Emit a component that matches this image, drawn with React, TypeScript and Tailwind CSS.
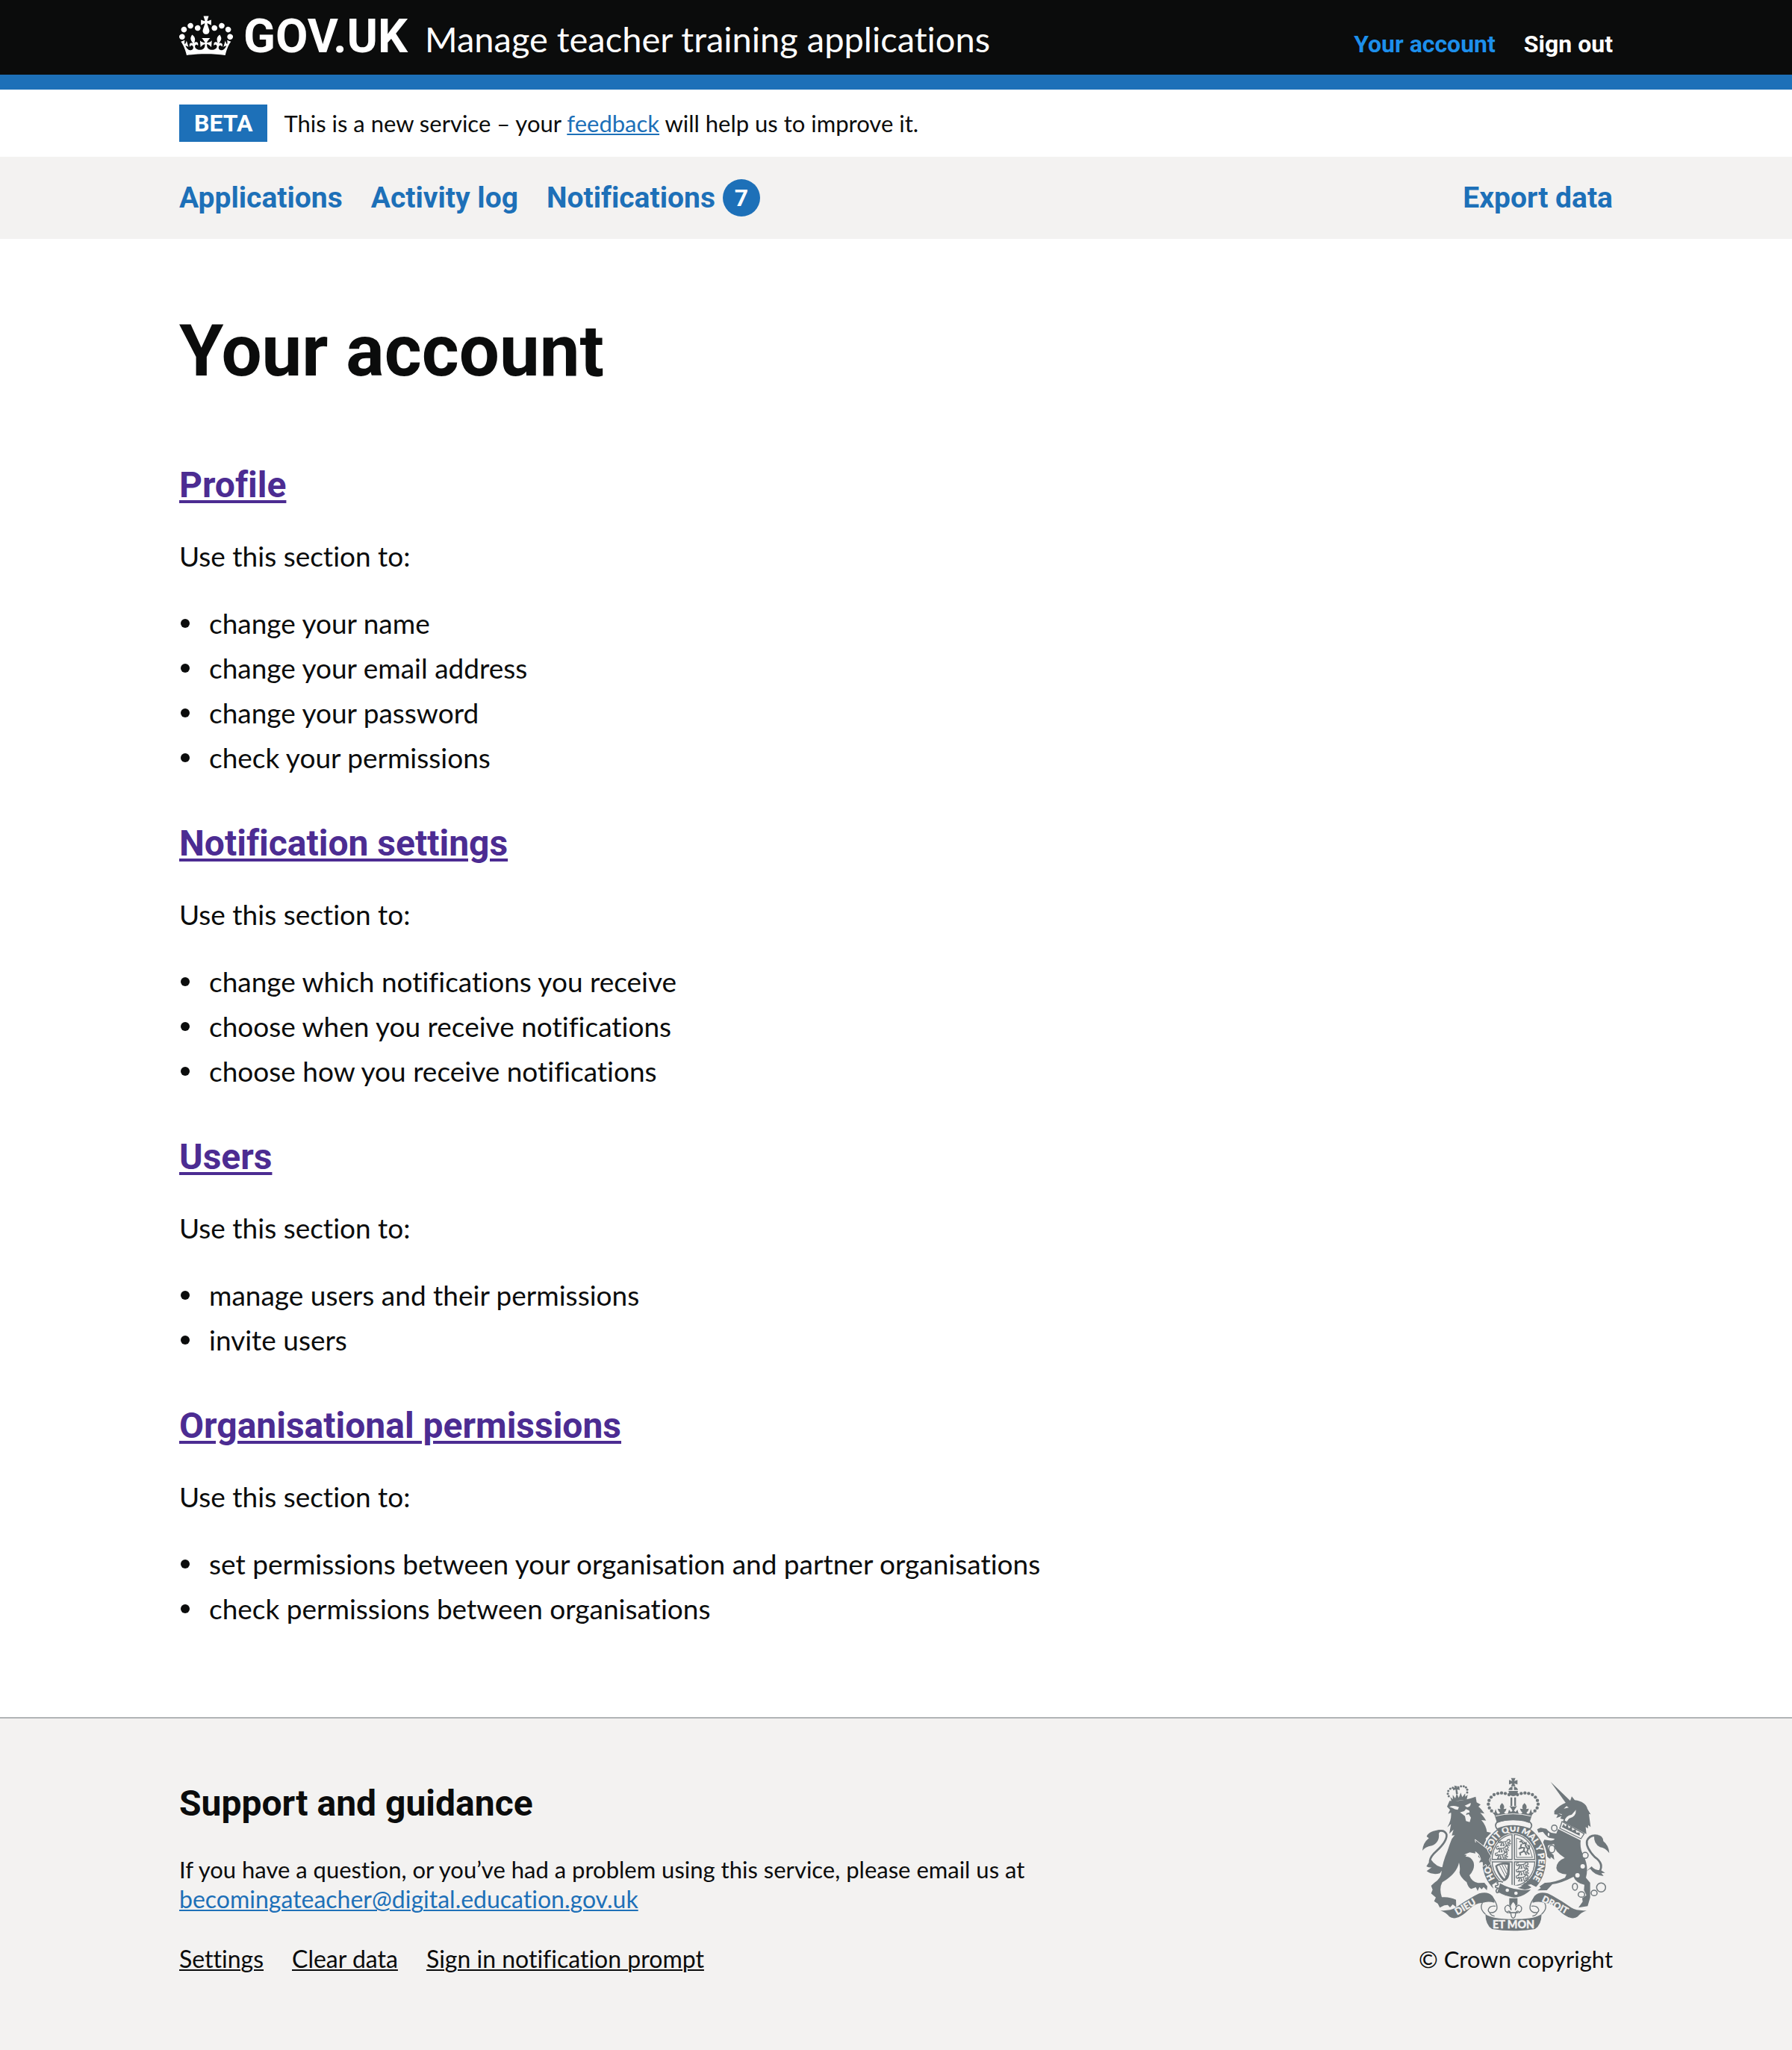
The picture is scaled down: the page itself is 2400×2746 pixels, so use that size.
import type { ReactNode } from "react";

const SECTIONS = [
  {
    title: "Profile",
    items: [
      "change your name",
      "change your email address",
      "change your password",
      "check your permissions",
    ],
  },
  {
    title: "Notification settings",
    items: [
      "change which notifications you receive",
      "choose when you receive notifications",
      "choose how you receive notifications",
    ],
  },
  {
    title: "Users",
    items: ["manage users and their permissions", "invite users"],
  },
  {
    title: "Organisational permissions",
    items: [
      "set permissions between your organisation and partner organisations",
      "check permissions between organisations",
    ],
  },
];

const FOOTER_LINKS = ["Settings", "Clear data", "Sign in notification prompt"];

function Container({ className = "", children }: { className?: string; children: ReactNode }) {
  return <div className={"mx-auto w-full max-w-[1980px] px-[30px] " + className}>{children}</div>;
}

function Crown() {
  return (
    <svg aria-hidden="true" viewBox="0 0 132 97" className="h-[54px] w-[72px] shrink-0 self-start" fill="currentColor">
      <path
        fillRule="evenodd"
        d="M25 30.2c3.5 1.5 7.7-.2 9.1-3.7 1.5-3.6-.2-7.8-3.9-9.2-3.6-1.4-7.6.3-9.1 3.9-1.4 3.5.3 7.5 3.9 9zM9 39.5c3.6 1.5 7.8-.2 9.2-3.7 1.5-3.6-.2-7.8-3.9-9.1-3.6-1.5-7.6.2-9.1 3.8-1.4 3.5.3 7.5 3.8 9zM4.4 57.2c3.5 1.5 7.7-.2 9.1-3.8 1.5-3.6-.2-7.7-3.9-9.1-3.5-1.5-7.6.3-9.1 3.8-1.4 3.5.3 7.6 3.9 9.1zm38.3-21.4c3.5 1.5 7.7-.2 9.1-3.8 1.5-3.6-.2-7.7-3.9-9.1-3.6-1.5-7.6.3-9.1 3.8-1.3 3.6.4 7.7 3.9 9.1zm64.4-5.6c-3.6 1.5-7.8-.2-9.1-3.7-1.5-3.6.2-7.8 3.8-9.2 3.6-1.4 7.7.3 9.2 3.9 1.3 3.5-.4 7.5-3.9 9zm15.9 9.3c-3.6 1.5-7.7-.2-9.1-3.7-1.5-3.6.2-7.8 3.7-9.1 3.6-1.5 7.7.2 9.2 3.8 1.5 3.5-.3 7.5-3.8 9zm4.7 17.7c-3.6 1.5-7.8-.2-9.2-3.8-1.5-3.6.2-7.7 3.9-9.1 3.6-1.5 7.7.3 9.2 3.8 1.3 3.5-.4 7.6-3.9 9.1zM89.3 35.8c-3.6 1.5-7.8-.2-9.2-3.8-1.4-3.6.2-7.7 3.9-9.1 3.6-1.5 7.7.3 9.2 3.8 1.4 3.6-.3 7.7-3.9 9.1zM69.7 17.7l8.9 4.7V9.3l-8.9 2.8c-.2-.3-.5-.6-.9-.9L72.4 0H59.6l3.5 11.2c-.3.3-.6.5-.9.9l-8.8-2.8v13.1l8.8-4.7c.3.3.6.7.9.9l-5 15.4v.1c-.2.8-.4 1.6-.4 2.4 0 4.1 3.1 7.5 7 8.1h.2c.3 0 .7.1 1 .1.4 0 .7 0 1-.1h.2c4-.6 7.1-4.1 7.1-8.1 0-.8-.1-1.7-.4-2.4V34l-5.1-15.4c.4-.2.7-.6 1-.9zM66 92.8c16.9 0 32.8 1.1 47.1 3.2 4-16.9 8.9-26.7 14-33.5l-9.6-3.4c1 4.9 1.1 7.2 0 10.2-1.5-1.4-3-4.3-4.2-8.7L108.6 76c2.8-2 5-3.2 7.5-3.3-4.4 9.4-10 11.9-13.6 11.2-4.3-.8-6.3-4.6-5.6-7.9 1-4.7 5.7-5.9 8-.5 4.3-8.7-3-11.4-7.6-8.8 7.1-7.2 7.9-13.5 2.1-21.1-8 6.1-8.1 12.3-4.5 20.8-4.7-5.4-12.1-2.5-9.5 6.2 3.4-5.2 7.9-2 7.2 3.1-.6 4.3-6.4 7.8-13.5 7.2-10.3-.9-10.9-8-11.2-13.8 2.5-.5 7.1 1.8 11 7.3L80.2 60c-4.1 4.4-8 5.3-12.3 5.4 1.4-4.4 8-11.6 8-11.6H55.5s6.4 7.2 7.9 11.6c-4.2-.1-8-1-12.3-5.4l1.4 16.4c3.9-5.5 8.5-7.7 10.9-7.3-.3 5.8-.9 12.8-11.1 13.8-7.2.6-12.9-2.9-13.5-7.2-.7-5 3.8-8.3 7.1-3.1 2.7-8.7-4.6-11.6-9.4-6.2 3.7-8.5 3.6-14.7-4.6-20.8-5.8 7.6-5 13.9 2.2 21.1-4.7-2.6-11.9.1-7.7 8.8 2.3-5.5 7.1-4.2 8.1.5.7 3.3-1.3 7.1-5.7 7.9-3.5.7-9-1.8-13.5-11.2 2.5.1 4.7 1.3 7.5 3.3l-4.7-15.4c-1.2 4.4-2.7 7.2-4.3 8.7-1.1-3-.9-5.3 0-10.2l-9.5 3.4c5 6.9 9.9 16.7 14 33.5 14.8-2.1 30.8-3.2 47.7-3.2z"
      />
    </svg>
  );
}

const INK = "#6f777b";
const PAPER = "#f3f2f1";
const CREST_FONT = "Lato, sans-serif";
/* The lion's paw hides two letters of the motto, so the gap stands in for them. */
const GARTER_MOTTO = "HO" + "\u00a0".repeat(7) + "SOIT QUI MAL Y PENSE";

const CROWN_BEADS: [number, number][] = [
  [420, 132], [405, 127], [390, 125], [375, 127], [360, 132], [348, 142], [340, 155], [337, 170], [341, 185], [350, 197],
];

/* One half of the imperial crown; the other half is its mirror image. */
function CrownHalf() {
  return (
    <g>
      {CROWN_BEADS.map(([x, y]) => (
        <circle key={x} cx={x} cy={y} r="6.5" />
      ))}
      <path d="M438 234 Q400 234 372 246 L362 214 L344 192 Q352 206 362 204 L366 190 L372 206 Q380 212 384 204 L378 198 L374 188 L386 190 Q378 178 392 166 Q406 178 398 190 L410 188 L406 198 L400 204 Q406 212 416 206 L420 192 L428 202 L434 196 L422 178 L438 180 Z" />
      <path d="M426 143h7v34h-7z" />
    </g>
  );
}

/* One half of the motto scroll, from the outer tail to the inner curl. */
function ScrollHalf() {
  return (
    <g>
      <path d="M144 597 Q182 600 206 586 Q256 550 300 529 Q334 519 352 538 Q364 552 361 566 Q335 558 313 567 Q288 566 262 590 Q232 622 205 628 Q190 630 180 622 Q168 606 144 597 Z" />
      <path
        d="M313 567 Q300 590 325 612 M350 540 Q376 572 371 592 Q362 610 342 605 Q330 596 343 584 Q352 578 366 580 M342 606 Q348 618 362 620"
        fill="none"
        stroke={INK}
        strokeWidth="4"
      />
    </g>
  );
}

/* A passant lion, small enough to read as a few angular strokes. */
function PassantLion({ x, y }: { x: number; y: number }) {
  return (
    <path
      transform={`translate(${x} ${y})`}
      d="M0 2 Q-3 12 4 13 L8 9 Q22 12 34 6 L36 1 L44 0 L47 7 L41 12 L46 18 L50 16 M36 10 L40 23 L46 24 M28 11 L31 23 L37 23 M8 10 L13 17 L8 24 L14 24 M16 12 L22 19 L18 24 L24 24 M2 3 L9 1"
      fill="none"
      stroke={INK}
      strokeWidth="4"
      strokeLinejoin="round"
    />
  );
}

function RoyalArms() {
  return (
    <svg aria-hidden="true" viewBox="69 63 756 618" className="h-[206px] w-[252px]" fill={INK}>
      {/* Lion supporter */}
      <g>
        <path d="M190 163 L184 141 L194 151 L194 133 L204 147 L210 127 L218 145 L226 124 L232 142 L244 127 L244 140 L254 132 L250 152 Q220 152 190 163 Z" />
        {[[178, 138], [174, 128], [176, 117], [184, 108], [194, 104], [216, 102], [227, 98], [238, 98], [247, 103], [252, 112], [252, 123]].map(([x, y]) => (
          <circle key={`${x}-${y}`} cx={x} cy={y} r="4.5" />
        ))}
        <path d="M200 95l12 3-1 7 9-4 2 12-10-2 3 18-8 1-2-19-9 4-2-12 8 1z" />
        <path d="M171 180 L181 157 Q232 160 286 140 L290 163 L306 172 L297 180 Q308 188 321 208 L304 205 Q314 214 328 236 L309 234 Q328 256 331 281 L348 285 L326 308 Q332 330 341 345 L337 362 L346 379 L340 394 L346 410 L331 426 L327 412 L314 421 L313 404 L297 406 L306 391 L296 381 L302 366 L284 360 L285 368 L262 364 L240 373 L250 374 L245 381 Q266 378 277 402 Q286 428 261 456 Q270 482 296 487 L321 486 L333 500 L331 516 L318 503 L310 512 L301 503 L294 519 L287 504 L268 511 Q255 505 250 484 Q222 462 221 444 Q225 425 219 405 Q210 450 152 484 Q138 508 150 544 Q180 541 207 554 L208 584 L194 573 L183 585 L174 575 L160 577 L142 586 L134 570 L119 560 L126 545 L107 529 L113 514 L107 498 L120 486 Q149 466 149 440 Q154 402 172 360 Q182 330 190 310 L202 295 L190 296 L197 272 L180 289 L187 250 L172 263 Q190 232 187 204 L175 209 L183 193 Z" />
        <path d="M180 181 Q198 172 219 182 L214 193 Q200 191 196 187 Z M242 176 L266 165 Q268 180 252 183 Z M223 203 L240 198 L247 190 L260 196 L262 203 L250 206 L247 214 L258 210 L267 224 L262 242 L247 238 L243 218 L232 209 Z" fill={PAPER} />
        <path d="M151 434 Q100 425 102 398 Q104 380 130 357 Q172 318 169 292 Q160 270 132 280" fill="none" stroke={INK} strokeWidth="8" />
        <path d="M148 273 Q98 276 89 300 L98 307 Q74 326 72 357 Q82 342 110 337 Q142 324 138 288 Z" />
        <path d="M106 392 L88 420 Q100 426 110 424 L89 439 Q112 456 142 448 L160 424 Q128 424 106 392 Z" />
      </g>

      {/* Unicorn supporter */}
      <g>
        <path d="M587 80 L668 158 L650 168 Z" />
        <path d="M648 164 L666 156 L672 139 L684 154 Q728 160 735 189 L748 211 L741 210 L748 262 L738 254 L737 268 L728 262 L731 290 L636 240 L640 232 L626 228 L631 218 L610 226 L616 212 L602 211 L602 197 Q622 174 648 164 Z" />
        <path d="M640 188 L651 178 L660 184 Z M618 208 L632 210 L632 214 Z M689 193 Q690 222 661 228 L652 240 L644 236 Q648 216 672 212 Z" fill={PAPER} />
        <path d="M633 240 L722 289 L709 309 L624 267 Z" fill={PAPER} stroke={INK} strokeWidth="4" />
        <path d="M632 262 L640 249 L646 260 L655 250 L660 268 L672 258 L674 276 L688 270 L690 284 L704 284 L704 297 Z" />
        <path d="M617 270 L708 316 Q704 348 718 374 Q742 420 729 466 L746 486 L746 545 L736 580 L699 586 L716 562 L714 548 L731 536 L721 515 L723 494 Q690 488 679 462 Q630 488 594 492 L572 516 L534 517 L548 507 L542 501 L564 486 Q600 487 645 466 L651 452 Q614 452 610 427 Q611 398 644 386 Q600 358 601 330 L577 336 Q572 356 599 374 L602 394 L588 382 L586 390 Q570 382 572 372 L545 330 L555 327 L562 313 Q602 321 603 309 L580 305 Q566 296 556 281 L538 284 L533 271 L547 265 L570 269 Q582 284 594 286 L610 288 Z" />
        <path d="M730 440 L752 420 Q762 436 790 436 L806 446 L791 447 L800 459 Q764 457 746 430 Z" />
        <path d="M783 441 Q804 410 764 382 Q728 344 733 318 Q744 290 778 297" fill="none" stroke={INK} strokeWidth="8" />
        <path d="M760 296 Q796 288 799 319 Q821 336 823 367 Q806 345 786 343 Q760 330 762 298 Z" />
        <circle cx="716" cy="420" r="9" fill={PAPER} />
        <circle cx="695" cy="456" r="9" fill={PAPER} />
        <g fill={PAPER} stroke={INK} strokeWidth="4.5">
          <ellipse cx="602" cy="266" rx="11" ry="12" />
          <ellipse cx="592" cy="350" rx="12" ry="15" />
          <ellipse cx="579" cy="292" rx="6" ry="9" />
          <circle cx="726" cy="376" r="12" />
          <ellipse cx="685" cy="502" rx="10" ry="14" />
          <ellipse cx="711" cy="533" rx="13" ry="11" />
          <ellipse cx="762" cy="527" rx="12" ry="11" />
          <circle cx="790" cy="505" r="18" />
        </g>
      </g>

      {/* Garter, with its motto, round the quartered shield */}
      <ellipse cx="440" cy="397" rx="134" ry="152" fill={PAPER} />
      <ellipse cx="440" cy="397" rx="128" ry="147" />
      <ellipse cx="438" cy="395" rx="91" ry="108" fill={PAPER} />
      <defs>
        <path
          id="garter-ring"
          d="M440 514 A98 117 0 0 1 342 397 A98 117 0 0 1 440 280 A98 117 0 0 1 538 397 A98 117 0 0 1 440 514"
        />
        <path id="scroll-left" d="M212 616 Q262 588 316 553" />
        <path id="scroll-right" d="M550 560 Q612 590 676 627" />
      </defs>
      <text fill={PAPER} stroke={PAPER} strokeWidth="1" fontFamily={CREST_FONT} fontWeight="900" fontSize="35">
        <textPath href="#garter-ring" startOffset="92">
          {GARTER_MOTTO}
        </textPath>
      </text>
      {/* The lion's forepaw rests on the garter */}
      <path
        d="M284 312 L332 350 L337 362 L348 379 L341 394 L348 410 L331 426 L327 412 L314 421 L313 404 L297 406 L306 391 L290 350 Z"
        stroke={PAPER}
        strokeWidth="3"
      />
      <path d="M240 320 L294 325 L312 350 L308 380 L286 360 L262 362 L240 370 Z" />
      <ellipse cx="438" cy="395" rx="86" ry="103" fill="none" stroke={INK} strokeWidth="4" />
      <path d="M437 292V498M352 397H524" fill="none" stroke={INK} strokeWidth="14" />
      <path d="M437 290V500M350 397H526" fill="none" stroke={PAPER} strokeWidth="5" />
      <PassantLion x={378} y={312} />
      <PassantLion x={370} y={338} />
      <PassantLion x={366} y={364} />
      <PassantLion x={450} y={404} />
      <PassantLion x={450} y={430} />
      <PassantLion x={450} y={455} />
      {/* Rampant lion in its double border */}
      <path d="M450 307V384H515 M450 306Q500 316 514 384" fill="none" stroke={INK} strokeWidth="3" />
      <path d="M462 322 L470 318 L476 328 L488 326 L486 336 L496 352 L492 362 L502 372 M470 330 L466 344 L482 346 L478 360 L464 366 L466 376 M482 358 L490 374 M458 350 L470 346 M494 350 Q508 346 498 334" fill="none" stroke={INK} strokeWidth="6" />
      {/* Harp */}
      <path d="M364 418 Q386 400 424 406 L422 452 Q416 478 398 480 Q372 452 364 418 Z M372 420 Q382 452 402 470 L412 448 L415 414 Q390 410 372 420 Z" fillRule="evenodd" />
      <path d="M382 416 L406 462 M392 414 L410 450 M402 412 L413 436" stroke={INK} strokeWidth="3" />

      {/* Garter strap and buckle */}
      <path d="M352 494 L384 474 Q440 510 508 492 L536 506 Q486 552 436 546 Q392 540 360 516 Z" fill={PAPER} />
      <path d="M384 488 Q440 520 508 514 Q476 545 440 545 Q404 540 374 522 Z" />
      <path d="M454 506 Q472 504 482 486 L510 504 Q498 514 484 514 Z" />
      <circle cx="413" cy="516" r="7" fill={PAPER} />
      <circle cx="448" cy="528" r="7" fill={PAPER} />
      <path d="M396 484 Q378 476 372 486 Q384 496 366 498 Q362 506 376 508 Q362 518 372 526 Q382 526 390 514" fill="none" stroke={INK} strokeWidth="5" />

      {/* Imperial crown */}
      <path d="M372 242 Q400 232 437 232 Q476 232 504 242 Q518 256 504 270 Q437 244 372 270 Q360 256 372 242 Z" fill={PAPER} stroke={INK} strokeWidth="5" />
      <CrownHalf />
      <g transform="translate(874 0) scale(-1 1)">
        <CrownHalf />
      </g>
      <path d="M428 65h18l-5 12 13-4v18l-13-4 5 11h-18l5-11-13 4v-18l13 4z" />
      <path d="M434 99 V113 H418 Q420 102 434 99 Z M440 99 Q454 102 456 113 H440 Z M418 117 H456 Q454 137 437 138 Q420 137 418 117 Z" />
      <path d="M366 218 Q437 200 508 218" fill="none" stroke={PAPER} strokeWidth="3" />

      {/* Motto scroll */}
      <ScrollHalf />
      <g transform="translate(876 0) scale(-1 1)">
        <ScrollHalf />
      </g>
      <path d="M325 611 Q350 632 438 632 Q526 632 551 611 Q550 656 524 672 Q484 679 438 679 Q392 679 352 672 Q326 656 325 611 Z" />
      <g fill={PAPER} stroke={PAPER} strokeWidth="1" fontFamily={CREST_FONT} fontWeight="900">
        <text fontSize="38">
          <textPath href="#scroll-left">DIEU</textPath>
        </text>
        <text fontSize="36">
          <textPath href="#scroll-right">DROIT</textPath>
        </text>
        <text x="438" y="670" fontSize="43" textAnchor="middle">
          ET MON
        </text>
      </g>

      {/* Fleur-de-lis badge */}
      <path d="M421 548h33v28h-33z" />
      <path d="M437 560 Q456 580 445 596 Q448 578 460 576 Q476 582 468 600 L460 606 Q458 596 450 602 L446 612 Q446 626 437 628 Q428 626 428 612 L424 602 Q416 596 414 606 L406 600 Q398 582 414 576 Q426 578 429 596 Q418 580 437 560 Z" fill={PAPER} stroke={INK} strokeWidth="4" />
      <path d="M418 606h38" stroke={INK} strokeWidth="5" />
    </svg>
  );
}

export default function App() {
  return (
    <div className="bg-[#f3f2f1] font-[Lato,sans-serif] text-[31px] leading-[40px] text-[#0b0c0c] [font-variant-ligatures:none]">
      <header className="border-b-[20px] border-[#1d70b8] bg-[#0b0c0c] text-white">
        <Container className="flex h-[100px] items-baseline pt-[21px]">
          <a href="#" className="mr-[23px] flex items-baseline gap-[14px] self-start font-[Roboto,sans-serif] text-[63px] leading-[56px] font-bold">
            <Crown />
            <span>GOV.UK</span>
          </a>
          <a href="#" className="text-[47px] leading-[62px]">
            Manage teacher training applications
          </a>
          <nav aria-label="Account" className="ml-auto flex gap-[38px] font-[Roboto,sans-serif] text-[32px] leading-[76px] font-bold">
            <a href="#" aria-current="page" className="text-[#1d8feb]">
              Your account
            </a>
            <a href="#">Sign out</a>
          </nav>
        </Container>
      </header>

      <div className="bg-white">
        <Container className="flex items-center gap-[22px] py-[20px]">
          <strong className="bg-[#1d70b8] px-[20px] font-[Roboto,sans-serif] text-[32px] leading-[50px] font-bold text-white">
            BETA
          </strong>
          <p>
            This is a new service – your{" "}
            <a href="#" className="text-[#1d70b8] underline decoration-2 underline-offset-2">
              feedback
            </a>{" "}
            will help us to improve it.
          </p>
        </Container>
      </div>

      <nav aria-label="Primary" className="font-[Roboto,sans-serif] text-[39px] font-bold text-[#1d70b8]">
        <Container className="flex h-[110px] items-center gap-[38px]">
          <a href="#">Applications</a>
          <a href="#">Activity log</a>
          <a href="#" className="flex items-center gap-[10px]">
            Notifications
            <span className="flex size-[50px] items-center justify-center rounded-full bg-[#1d70b8] text-[32px] text-white">
              7
            </span>
          </a>
          <a href="#" className="ml-auto">
            Export data
          </a>
        </Container>
      </nav>

      <main className="bg-white">
        <Container className="pt-[100px] pb-[120px]">
          <h1 className="mb-[100px] font-[Roboto,sans-serif] text-[96px] leading-[100px] font-bold">Your account</h1>
          <div className="flex flex-col gap-[60px] text-[37px] leading-[50px]">
            {SECTIONS.map((section) => (
              <section key={section.title} className="flex flex-col gap-[40px]">
                <h2 className="font-[Roboto,sans-serif] text-[48px] leading-[60px] font-bold">
                  <a href="#" className="text-[#4c2c92] underline decoration-4 underline-offset-4">
                    {section.title}
                  </a>
                </h2>
                <p>Use this section to:</p>
                <ul className="flex flex-col gap-[10px]">
                  {section.items.map((item) => (
                    <li key={item} className="flex items-center gap-[26px]">
                      <span aria-hidden="true" className="ml-[2px] size-[12px] shrink-0 rounded-full bg-[#0b0c0c]" />
                      {item}
                    </li>
                  ))}
                </ul>
              </section>
            ))}
          </div>
        </Container>
      </main>

      <footer className="border-t-2 border-[#b1b4b6]">
        <Container className="flex items-end justify-between pt-[79px] pb-[102px]">
          <div className="flex flex-col gap-[40px]">
            <div>
              <h2 className="mb-[38px] font-[Roboto,sans-serif] text-[48px] leading-[60px] font-bold">
                Support and guidance
              </h2>
              <p>If you have a question, or you’ve had a problem using this service, please email us at</p>
              <p className="text-[32px]">
                <a href="#" className="text-[#1d70b8] underline decoration-2 underline-offset-2">
                  becomingateacher@digital.education.gov.uk
                </a>
              </p>
            </div>
            <ul className="flex gap-[38px] text-[32px]">
              {FOOTER_LINKS.map((label) => (
                <li key={label}>
                  <a href="#" className="underline decoration-2 underline-offset-2">
                    {label}
                  </a>
                </li>
              ))}
            </ul>
          </div>
          <a href="#" className="flex flex-col items-center gap-[17px]">
            <RoyalArms />
            © Crown copyright
          </a>
        </Container>
      </footer>
    </div>
  );
}
